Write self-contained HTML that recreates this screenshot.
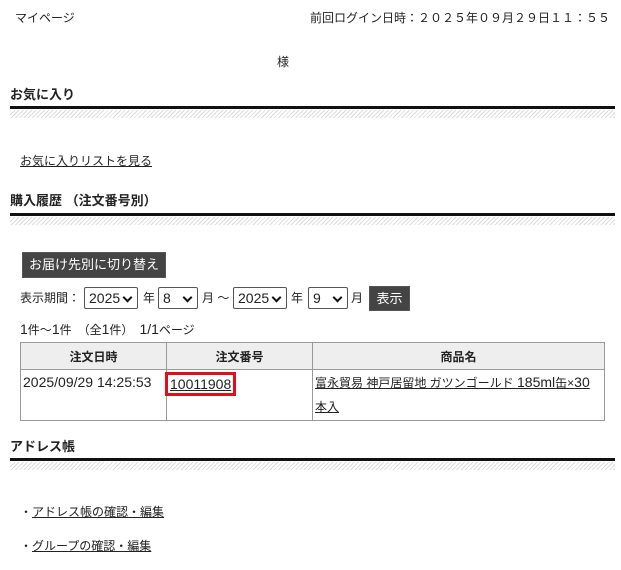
<!DOCTYPE html>
<html><head><meta charset="utf-8"><style>
*{margin:0;padding:0;box-sizing:border-box}
body{width:621px;height:570px;background:#fff;font-family:"Liberation Sans","Noto Sans CJK JP",sans-serif;font-size:12px;color:#222;position:relative;overflow:hidden}
.a{position:absolute;white-space:nowrap;line-height:14px}
.h{font-weight:bold;font-size:13px}
.line{position:absolute;left:10px;width:605px;height:3px;background:#111}
.st{position:absolute;left:10px;width:605px;height:8px;background:repeating-linear-gradient(135deg,#ddd 0 1px,#fff 1px 3px)}
a{color:#222;text-decoration:underline}
.btn{position:absolute;background:#444;color:#fff;font-size:12px;text-align:center;line-height:24px;border:1px solid #555}
.sel{position:absolute;height:22px;border:1px solid #555;border-radius:2px;font-size:14px;padding-left:4px;line-height:20px;background:#fff}
.sel:after{content:"";position:absolute;right:6px;top:6px;width:5px;height:5px;border-right:2px solid #111;border-bottom:2px solid #111;transform:rotate(45deg)}
table{position:absolute;left:20px;top:342px;border-collapse:collapse;width:585px}
td,th{border:1px solid #999;font-size:12px;vertical-align:top}
th{background:#eee;height:27px;font-weight:bold;text-align:center;vertical-align:middle}
td{height:51px;padding:0 2px;line-height:24px}
.n{font-size:14px}
</style></head><body>
<div class="a" style="left:15px;top:11px">マイページ</div>
<div class="a" style="left:310px;top:11px;letter-spacing:0px">前回ログイン日時：２０２５年０９月２９日１１：５５</div>
<div class="a" style="left:277px;top:55px">様</div>

<div class="a h" style="left:10px;top:88px">お気に入り</div>
<div class="line" style="top:106px"></div><div class="st" style="top:110px"></div>
<div class="a" style="left:20px;top:154px"><a>お気に入りリストを見る</a></div>

<div class="a h" style="left:10px;top:194px">購入履歴 （注文番号別）</div>
<div class="line" style="top:213px"></div><div class="st" style="top:217px"></div>

<div class="btn" style="left:22px;top:252px;width:144px;height:26px;font-size:13px">お届け先別に切り替え</div>
<div class="a" style="left:20px;top:291px">表示期間：</div>
<div class="sel" style="left:84px;top:287px;width:54px">2025</div>
<div class="a" style="left:143px;top:291px">年</div>
<div class="sel" style="left:158px;top:287px;width:40px">8</div>
<div class="a" style="left:202px;top:291px">月 ～</div>
<div class="sel" style="left:233px;top:287px;width:54px">2025</div>
<div class="a" style="left:291px;top:291px">年</div>
<div class="sel" style="left:308px;top:287px;width:40px">9</div>
<div class="a" style="left:351px;top:291px">月</div>
<div class="btn" style="left:369px;top:286px;width:41px;height:25px;font-size:13px">表示</div>
<div class="a" style="left:20px;top:322px"><span class="n">1</span>件～<span class="n">1</span>件　（全<span class="n">1</span>件）　<span class="n">1/1</span>ページ</div>

<table>
<tr><th style="width:146px">注文日時</th><th style="width:146px">注文番号</th><th>商品名</th></tr>
<tr><td class="n" style="font-size:14px">2025/09/29 14:25:53</td><td><span style="display:inline-block;border:3px solid #e0101a;padding:0 2px;line-height:18px;margin:2px 0 0 -4px;font-size:14px"><a>10011908</a></span></td><td style="padding-right:10px"><a>富永貿易 神戸居留地 ガツンゴールド <span class="n">185ml</span>缶×<span class="n">30</span><br>本入</a></td></tr>
</table>

<div class="a h" style="left:10px;top:440px">アドレス帳</div>
<div class="line" style="top:458px"></div><div class="st" style="top:462px"></div>
<div class="a" style="left:20px;top:505px">・<a>アドレス帳の確認・編集</a></div>
<div class="a" style="left:20px;top:539px">・<a>グループの確認・編集</a></div>
</body></html>
